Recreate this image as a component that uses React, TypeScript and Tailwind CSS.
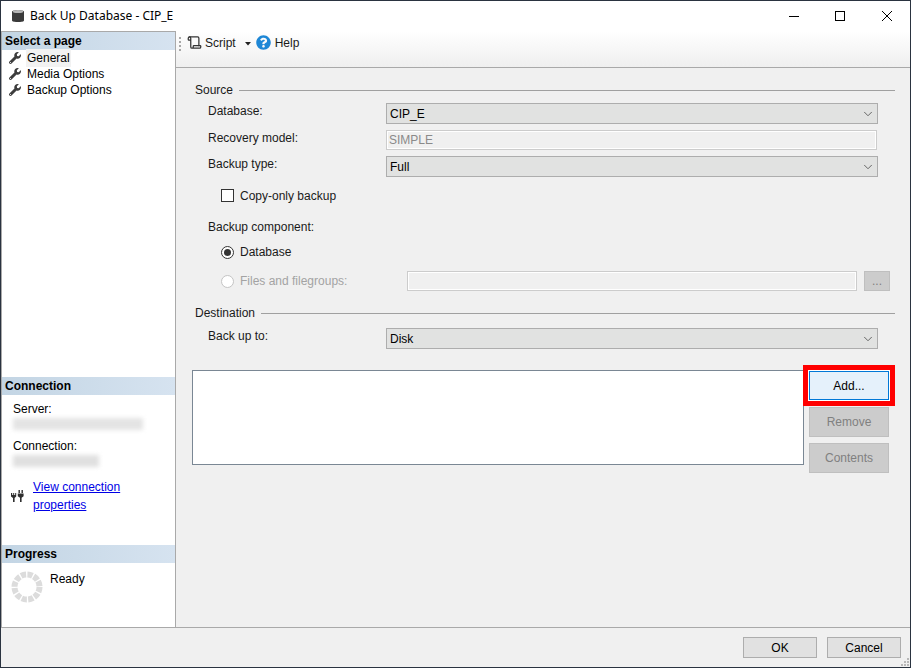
import { ChevronDown, Scroll } from "lucide-react";
import { FaQuestionCircle, FaWrench } from "react-icons/fa";

const font = "font-['Liberation_Sans',Arial,sans-serif]";

function PaneHeader({ title }: { title: string }) {
  return (
    <div className="flex h-[18px] items-center bg-gradient-to-r from-[#c3d5e4] to-[#d6e3f0] pl-[3px] text-[12px] font-bold text-black">
      {title}
    </div>
  );
}

function PageLink({ label, active }: { label: string; active?: boolean }) {
  return (
    <div className="flex h-4 items-center pl-[7px]">
      <FaWrench className="h-[12px] w-[12px] text-[#3d3d3d]" />
      <span className={`ml-[5px] px-px ${active ? "bg-[#f2f2f2]" : ""}`}>{label}</span>
    </div>
  );
}

function Select({ value }: { value: string }) {
  return (
    <div className="flex h-[21px] w-[492px] items-center justify-between border border-[#adadad] bg-[#e1e2e1] pl-[3px] pr-[2px] text-black">
      <span className="pt-px">{value}</span>
      <ChevronDown className="h-[14px] w-[14px] text-[#555]" strokeWidth={1.5} />
    </div>
  );
}

function FieldRow({ label, children }: { label: string; children: React.ReactNode }) {
  return (
    <div className="flex items-start">
      <span className="w-[194px] pl-[16px] leading-[16px]">{label}</span>
      {children}
    </div>
  );
}

function GroupTitle({ title }: { title: string }) {
  return (
    <div className="flex h-4 items-center pl-[3px]">
      <span>{title}</span>
      <div className="ml-[6px] h-px flex-1 bg-[#a0a0a0]" />
    </div>
  );
}

function SideButton({ label }: { label: string }) {
  return (
    <div className="flex h-[30px] w-[80px] items-center justify-center border border-[#bfbfbf] bg-[#cccccc] text-[#808080]">
      {label}
    </div>
  );
}

function DialogButton({ label }: { label: string }) {
  return (
    <div className="flex h-[21px] w-[74px] items-center justify-center border border-[#adadad] bg-[#e1e1e1] text-black">
      {label}
    </div>
  );
}

function DbIcon() {
  return (
    <svg width="16" height="16" viewBox="0 0 16 16" className="shrink-0">
      <path d="M2 3.5C2 1.9 14 1.9 14 3.5V12.5C14 14.6 2 14.6 2 12.5Z" fill="#3a3a3a" />
      <ellipse cx="8" cy="3.6" rx="5.2" ry="1.5" fill="#b5b5b5" />
    </svg>
  );
}

function PlugIcon() {
  return (
    <svg width="14" height="14" viewBox="0 0 14 14" className="shrink-0">
      <g fill="#2f2f2f">
        <path d="M0 4h1.2v2h1V4h1v2h1V4h1v3.4L3.6 9v4H2V9L0 7.4Z" />
        <rect x="7.5" y="1" width="1.4" height="3" />
        <rect x="10.5" y="1" width="1.4" height="3" />
        <path d="M6.8 4.6h5.8v2.6l-2 1.6V13H9V8.8L6.8 7.2Z" />
      </g>
    </svg>
  );
}

function Spinner() {
  return (
    <svg width="32" height="32" viewBox="0 0 32 32" className="shrink-0">
      <circle cx="16" cy="16" r="12.5" fill="none" stroke="#dcdcdc" strokeWidth="6" strokeDasharray="5.2 1.35" />
    </svg>
  );
}

export default function App() {
  return (
    <div className={`${font} flex h-[668px] w-[911px] flex-col border border-[#2a3340] bg-[#f0f0f0] text-[12px] text-[#1a1a1a]`}>
      {/* title bar */}
      <div className="flex h-[30px] shrink-0 items-center bg-white pl-[9px]">
        <DbIcon />
        <span className="ml-[4px] font-['Noto_Sans',sans-serif] text-[12px] text-black">Back Up Database - CIP_E</span>
        <div className="ml-auto flex items-center">
          <svg width="12" height="12" viewBox="0 0 12 12" className="mr-[34px]"><path d="M1 6.5H11" stroke="#000" /></svg>
          <svg width="12" height="12" viewBox="0 0 12 12" className="mr-[35px]"><rect x="1.5" y="1.5" width="9" height="9" fill="none" stroke="#000" /></svg>
          <svg width="12" height="12" viewBox="0 0 12 12" className="mr-[17px]"><path d="M1 1L11 11M11 1L1 11" stroke="#000" /></svg>
        </div>
      </div>

      <div className="flex min-h-0 flex-1">
        {/* left pane */}
        <div className="flex w-[175px] shrink-0 flex-col border-l border-r border-t border-[#a9a9a9] bg-white text-black">
          <div className="flex-1">
            <PaneHeader title="Select a page" />
            <PageLink label="General" active />
            <PageLink label="Media Options" />
            <PageLink label="Backup Options" />
          </div>
          <div className="h-[168px]">
            <PaneHeader title="Connection" />
            <div className="pl-[11px] pt-[7px]">
              <div className="h-[14px] leading-[14px]">Server:</div>
              <div className="mt-[2px] h-[12px] w-[130px] bg-[#e4e4e4] blur-[2px]" />
              <div className="mt-[9px] h-[14px] leading-[14px]">Connection:</div>
              <div className="mt-[2px] h-[12px] w-[86px] bg-[#e0e0e0] blur-[2px]" />
            </div>
            <div className="flex items-center pl-[9px] pt-[11px]">
              <PlugIcon />
              <span className="ml-[8px] text-[#0000e6] underline">View connection properties</span>
            </div>
          </div>
          <div className="h-[82px]">
            <PaneHeader title="Progress" />
            <div className="flex pl-[9px] pt-[8px]">
              <Spinner />
              <span className="ml-[7px] mt-px leading-[14px]">Ready</span>
            </div>
          </div>
        </div>

        {/* main pane */}
        <div className="flex min-w-0 flex-1 flex-col">
          <div className="flex h-[37px] shrink-0 items-start border-b border-[#a9a9a9] bg-gradient-to-b from-white to-[#efefef] pl-[3px] pt-[4px]">
            <div className="mt-[2px] flex h-[14px] w-[2px] flex-col justify-between">
              {[0, 1, 2, 3].map((i) => (
                <div key={i} className="h-[2px] w-[2px] bg-[#a8a8a8]" />
              ))}
            </div>
            <Scroll className="ml-[6px] h-[15px] w-[15px] text-[#333]" strokeWidth={2} />
            <span className="ml-[3px] leading-[16px]">Script</span>
            <svg width="6" height="4" viewBox="0 0 6 4" className="ml-[9px] mt-[7px]"><path d="M0 0H6L3 3.5Z" fill="#222" /></svg>
            <FaQuestionCircle className="ml-[5px] h-[15px] w-[15px] text-[#1e87d6]" />
            <span className="ml-[4px] leading-[16px]">Help</span>
          </div>

          <div className="flex flex-1 flex-col pl-[16px] pr-[15px] pt-[14px]">
            <GroupTitle title="Source" />
            <div className="mt-[5px]">
              <FieldRow label="Database:">
                <Select value="CIP_E" />
              </FieldRow>
            </div>
            <div className="mt-[6px]">
              <FieldRow label="Recovery model:">
                <div className="flex h-[20px] w-[491px] items-center border border-[#cccccc] bg-[#f0f0f0] pl-[2px] text-[#8a8a8a] shadow-[inset_0_0_0_1px_#ffffff]">
                  SIMPLE
                </div>
              </FieldRow>
            </div>
            <div className="mt-[6px]">
              <FieldRow label="Backup type:">
                <Select value="Full" />
              </FieldRow>
            </div>
            <div className="ml-[29px] mt-[11px] flex h-[15px] items-center">
              <div className="h-[13px] w-[13px] border border-[#333] bg-white" />
              <span className="ml-[6px]">Copy-only backup</span>
            </div>
            <div className="ml-[16px] mt-[16px] h-4 leading-[16px]">Backup component:</div>
            <div className="ml-[29px] mt-[9px] flex h-4 items-center">
              <div className="flex h-[13px] w-[13px] items-center justify-center rounded-full border border-[#333] bg-white">
                <div className="h-[7px] w-[7px] rounded-full bg-[#333]" />
              </div>
              <span className="ml-[6px]">Database</span>
            </div>
            <div className="ml-[29px] mt-[11px] flex h-[20px] items-center text-[#a3a3a3]">
              <div className="h-[13px] w-[13px] rounded-full border border-[#c4c4c4] bg-white" />
              <span className="ml-[6px]">Files and filegroups:</span>
              <div className="ml-auto mr-[5px] h-[20px] w-[450px] border border-[#cccccc] bg-[#f0f0f0] shadow-[inset_0_0_0_1px_#ffffff]" />
              <div className="mr-[5px] ml-[2px] flex h-[20px] w-[26px] items-center justify-center border border-[#bfbfbf] bg-[#cccccc] text-[#808080]">
                ...
              </div>
            </div>
            <div className="mt-[14px]">
              <GroupTitle title="Destination" />
            </div>
            <div className="mt-[7px]">
              <FieldRow label="Back up to:">
                <Select value="Disk" />
              </FieldRow>
            </div>
            <div className="mt-[16px] flex items-start">
              <div className="mt-[5px] h-[95px] w-[615px] border border-[#7a8794] bg-white" />
              <div className="-ml-px flex flex-col">
                <div className="border-[5px] border-[#ff0000] bg-white p-px">
                  <div className="flex h-[29px] w-[80px] items-center justify-center border border-[#0078d7] bg-[#e5f1fb] text-black">
                    Add...
                  </div>
                </div>
                <div className="ml-[6px] mt-px">
                  <SideButton label="Remove" />
                </div>
                <div className="ml-[6px] mt-[6px]">
                  <SideButton label="Contents" />
                </div>
              </div>
            </div>
          </div>
        </div>
      </div>

      {/* footer */}
      <div className="relative flex h-[40px] shrink-0 justify-end gap-[10px] border-t border-[#a9a9a9] pr-[9px] pt-[9px]">
        <DialogButton label="OK" />
        <DialogButton label="Cancel" />
        <div className="absolute bottom-[1px] right-[1px] grid grid-cols-3 gap-px">
          {[0, 0, 1, 0, 1, 1, 1, 1, 1].map((on, i) => (
            <div key={i} className={`h-[2px] w-[2px] ${on ? "bg-[#b8b8b8]" : ""}`} />
          ))}
        </div>
      </div>
    </div>
  );
}
